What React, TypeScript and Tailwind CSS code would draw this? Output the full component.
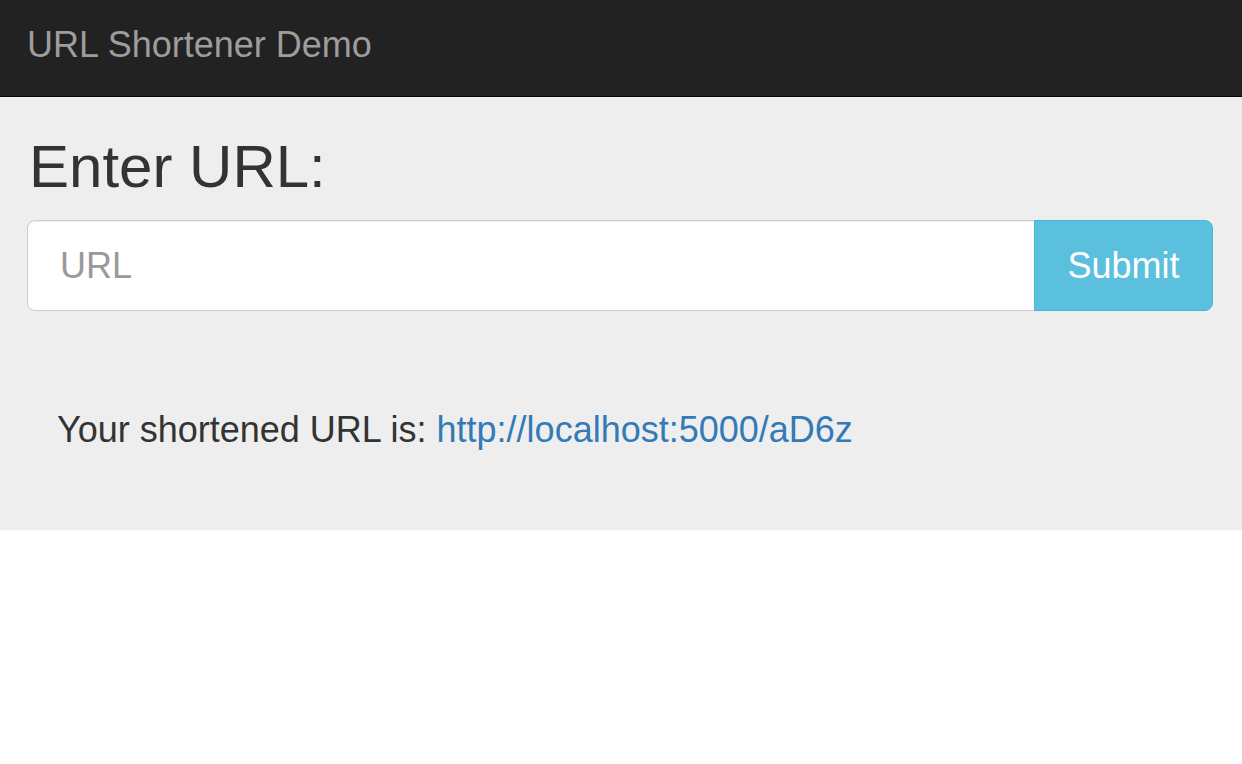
export default function App() {
  const font = { fontFamily: '"Liberation Sans", Arial, sans-serif' };
  return (
    <div style={font} className="min-h-[764px] bg-white">
      <nav className="h-[97px] bg-[#222] border-b border-[#080808] pl-[27px] pt-[27px]">
        <span className="text-[36px] leading-[36px] text-[#9d9d9d]">URL Shortener Demo</span>
      </nav>
      <div className="h-[433px] bg-[#eee] pl-[27px] pr-[29px] pt-[37px]">
        <h2 className="text-[60px] leading-[66px] text-[#333] ml-[2px] font-normal">Enter URL:</h2>
        <div className="mt-[20px] flex h-[91px]">
          <input
            type="text"
            placeholder="URL"
            className="flex-1 min-w-0 h-full bg-white border border-[#ccc] rounded-l-[8px] pl-[32px] text-[36px] text-[#555] placeholder:text-[#999] shadow-[inset_0_1px_1px_rgba(0,0,0,0.075)] outline-none"
          />
          <button className="h-full w-[179px] bg-[#5bc0de] border border-[#46b8da] rounded-r-[8px] text-white text-[36px] -ml-px">
            Submit
          </button>
        </div>
        <p className="mt-[93px] pl-[30px] text-[36px] leading-[52px] text-[#333]">
          Your shortened URL is:{" "}
          <a href="#" className="text-[#337ab7]">http://localhost:5000/aD6z</a>
        </p>
      </div>
    </div>
  );
}
